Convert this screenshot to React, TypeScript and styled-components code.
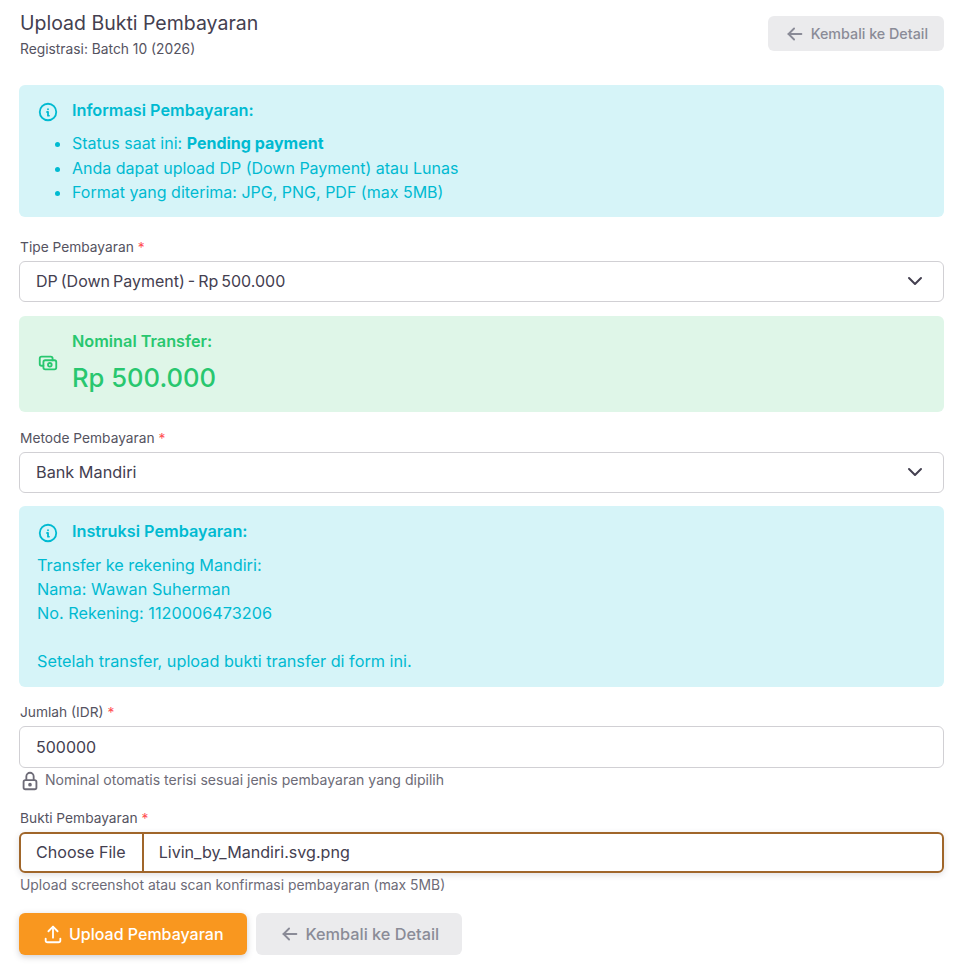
import styled, { createGlobalStyle } from 'styled-components'
import { TbArrowLeft, TbCash, TbChevronDown, TbInfoCircle, TbLock, TbUpload } from 'react-icons/tb'

const GlobalStyle = createGlobalStyle`
  * { box-sizing: border-box; }
  body {
    margin: 0;
    background: #fff;
    color: #444050;
    font-family: Inter, 'Liberation Sans', sans-serif;
    font-size: 15px;
  }
`

const Page = styled.main`
  width: 961px;
  height: 965px;
  padding: 11px 17px 0 19px;
  overflow: hidden;
`

const Header = styled.header`
  display: flex;
  justify-content: space-between;
  align-items: flex-start;
  height: 74px;
`

const HeaderText = styled.div`
  padding-left: 1px;
`

const Title = styled.h1`
  margin: -1px 0 0;
  font-size: 19.5px;
  line-height: 26px;
  font-weight: 400;
  color: #444050;
`

const Subtitle = styled.p`
  margin: 3px 0 0;
  font-size: 13.8px;
  line-height: 20px;
  color: #55535f;
`

const Button = styled.button<{ $tall?: boolean }>`
  display: inline-flex;
  align-items: center;
  justify-content: center;
  gap: 5px;
  height: ${p => (p.$tall ? '42px' : '35px')};
  padding: 0 ${p => (p.$tall ? '23px' : '16px')};
  margin-top: ${p => (p.$tall ? '0' : '5px')};
  border: none;
  border-radius: 6px;
  background: #ebebed;
  color: #8a8b97;
  font-family: inherit;
  font-size: ${p => (p.$tall ? '16.3px' : '14.3px')};
  font-weight: 500;
`

const PrimaryButton = styled(Button)`
  background: #f9971f;
  color: #fff;
  font-size: 16px;
  box-shadow: 0 2px 6px rgba(68, 64, 80, 0.25);
`

const Alert = styled.section<{ $tone: 'info' | 'success'; $height: number }>`
  display: flex;
  gap: 13px;
  height: ${p => p.$height}px;
  padding: 15px 18px;
  border-radius: 6px;
  background: ${p => (p.$tone === 'info' ? '#d6f4f8' : '#dff6e8')};
  color: ${p => (p.$tone === 'info' ? '#00bad1' : '#28c76f')};
`

const AlertIcon = styled.span<{ $center?: boolean }>`
  flex: none;
  display: flex;
  width: 22px;
  height: 22px;
  margin-top: ${p => (p.$center ? '21px' : '1px')};
`

const AlertBody = styled.div`
  flex: 1;
  min-width: 0;
`

const AlertTitle = styled.h2`
  margin: 0;
  font-size: 16.25px;
  line-height: 20px;
  font-weight: 600;
`

const InfoList = styled.ul`
  margin: 11px 0 0;
  padding: 0;
  list-style: disc;
  font-size: 16px;
  line-height: 24.5px;
`

const Amount = styled.div`
  margin-top: 9px;
  font-size: 25.6px;
  line-height: 36px;
  font-weight: 500;
`

const InstructionTitleRow = styled.div`
  display: flex;
  gap: 13px;
`

const Instructions = styled.p`
  margin: 9px 0 0;
  font-size: 16.25px;
  line-height: 24px;
`

const InstructionAlert = styled(Alert)`
  display: block;
`

const Field = styled.div<{ $top: number }>`
  margin-top: ${p => p.$top}px;
`

const Label = styled.label`
  display: block;
  height: 22px;
  padding-left: 1px;
  font-size: 13.75px;
  line-height: 16px;
  color: #55535f;
`

const Required = styled.span`
  color: #ff4c51;
`

const SelectWrap = styled.div`
  position: relative;
  display: flex;
  color: #444050;
  svg {
    position: absolute;
    top: 8px;
    right: 17px;
    pointer-events: none;
  }
`

const Select = styled.select<{ $tight?: boolean }>`
  width: 100%;
  height: 41px;
  padding: 0 40px 2px 16px;
  appearance: none;
  border: 1px solid #d1d0d4;
  border-radius: 6px;
  background: #fff;
  color: #444050;
  font-family: inherit;
  font-size: ${p => (p.$tight ? '16px' : '16.25px')};
  word-spacing: ${p => (p.$tight ? '-1.5px' : 'normal')};
`

const Input = styled.input`
  display: block;
  width: 100%;
  height: 42px;
  padding: 0 16px;
  border: 1px solid #d1d0d4;
  border-radius: 6px;
  color: #444050;
  font-family: inherit;
  font-size: 16px;
`

const Hint = styled.div`
  display: flex;
  align-items: center;
  gap: 4px;
  height: 20px;
  margin-top: 2px;
  padding-left: 1px;
  font-size: 13.9px;
  line-height: 20px;
  color: #6d6b77;
  svg {
    flex: none;
    margin: 2px 0 0 -1px;
  }
`

const LockHint = styled(Hint)`
  font-size: 14.05px;
`

const FileBox = styled.div`
  display: flex;
  height: 41px;
  border: 2px solid #a0662a;
  border-radius: 6px;
  box-shadow: 0 2px 6px rgba(68, 64, 80, 0.16);
  font-size: 16.1px;
  color: #444050;
`

const FileButton = styled.span`
  display: flex;
  align-items: center;
  padding: 0 16px 2px 15px;
  border-right: 2px solid #a0662a;
`

const FileName = styled.span`
  display: flex;
  align-items: center;
  padding: 0 0 2px 15px;
`

const Actions = styled.div`
  display: flex;
  gap: 9px;
  margin-top: 18px;
`

export default function App() {
  return (
    <Page>
      <GlobalStyle />
      <Header>
        <HeaderText>
          <Title>Upload Bukti Pembayaran</Title>
          <Subtitle>Registrasi: Batch 10 (2026)</Subtitle>
        </HeaderText>
        <Button>
          <TbArrowLeft size={22} />
          Kembali ke Detail
        </Button>
      </Header>

      <Alert $tone='info' $height={132}>
        <AlertIcon>
          <TbInfoCircle size={22} />
        </AlertIcon>
        <AlertBody>
          <AlertTitle>Informasi Pembayaran:</AlertTitle>
          <InfoList>
            <li>
              Status saat ini: <strong>Pending payment</strong>
            </li>
            <li>Anda dapat upload DP (Down Payment) atau Lunas</li>
            <li>Format yang diterima: JPG, PNG, PDF (max 5MB)</li>
          </InfoList>
        </AlertBody>
      </Alert>

      <Field $top={22}>
        <Label>
          Tipe Pembayaran <Required>*</Required>
        </Label>
        <SelectWrap>
          <Select $tight defaultValue='dp'>
            <option value='dp'>DP (Down Payment) - Rp 500.000</option>
          </Select>
          <TbChevronDown size={24} />
        </SelectWrap>
      </Field>

      <Field $top={14}>
        <Alert $tone='success' $height={96}>
          <AlertIcon $center>
            <TbCash size={22} />
          </AlertIcon>
          <AlertBody>
            <AlertTitle>Nominal Transfer:</AlertTitle>
            <Amount>Rp 500.000</Amount>
          </AlertBody>
        </Alert>
      </Field>

      <Field $top={18}>
        <Label>
          Metode Pembayaran <Required>*</Required>
        </Label>
        <SelectWrap>
          <Select defaultValue='mandiri'>
            <option value='mandiri'>Bank Mandiri</option>
          </Select>
          <TbChevronDown size={24} />
        </SelectWrap>
      </Field>

      <Field $top={13}>
        <InstructionAlert $tone='info' $height={181}>
          <InstructionTitleRow>
            <AlertIcon>
              <TbInfoCircle size={22} />
            </AlertIcon>
            <AlertTitle>Instruksi Pembayaran:</AlertTitle>
          </InstructionTitleRow>
          <Instructions>
            Transfer ke rekening Mandiri:
            <br />
            Nama: Wawan Suherman
            <br />
            No. Rekening: 1120006473206
            <br />
            <br />
            Setelah transfer, upload bukti transfer di form ini.
          </Instructions>
        </InstructionAlert>
      </Field>

      <Field $top={17}>
        <Label>
          Jumlah (IDR) <Required>*</Required>
        </Label>
        <Input defaultValue='500000' />
        <LockHint>
          <TbLock size={22} />
          Nominal otomatis terisi sesuai jenis pembayaran yang dipilih
        </LockHint>
      </Field>

      <Field $top={20}>
        <Label>
          Bukti Pembayaran <Required>*</Required>
        </Label>
        <FileBox>
          <FileButton>Choose File</FileButton>
          <FileName>Livin_by_Mandiri.svg.png</FileName>
        </FileBox>
        <Hint>Upload screenshot atau scan konfirmasi pembayaran (max 5MB)</Hint>
      </Field>

      <Actions>
        <PrimaryButton $tall>
          <TbUpload size={22} />
          Upload Pembayaran
        </PrimaryButton>
        <Button $tall>
          <TbArrowLeft size={22} />
          Kembali ke Detail
        </Button>
      </Actions>
    </Page>
  )
}
